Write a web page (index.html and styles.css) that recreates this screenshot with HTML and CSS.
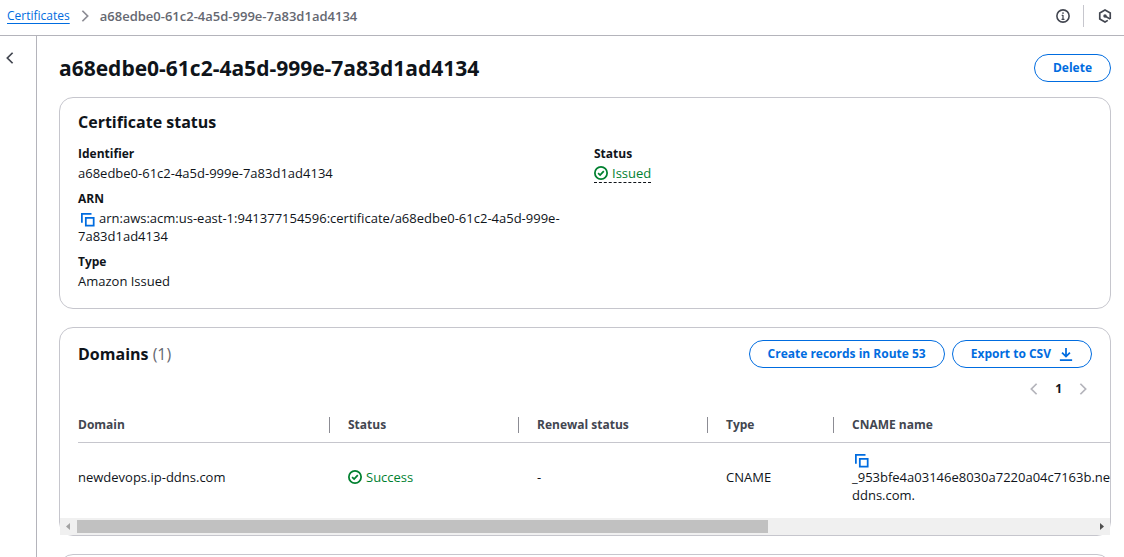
FILE: index.html
```html
<!DOCTYPE html>
<html lang="en">
<head>
<meta charset="utf-8">
<title>Certificate details</title>
<link rel="stylesheet" href="styles.css">
</head>
<body>
<svg class="defs" aria-hidden="true">
  <symbol id="copy" viewBox="0 0 16 16"><path d="M1 11V1h11M5.500 5.500h9v9h-9z" fill="none" stroke="currentColor" stroke-width="2"/></symbol>
  <symbol id="ok" viewBox="0 0 16 16"><g fill="none" stroke="currentColor" stroke-width="2"><circle cx="8" cy="8" r="7"/><path d="M4.700 8.200 7 10.400l4.200-4.600"/></g></symbol>
  <symbol id="left" viewBox="0 0 16 16"><path d="M11 2 5 8l6 6" fill="none" stroke="currentColor" stroke-width="2"/></symbol>
  <symbol id="right" viewBox="0 0 16 16"><path d="m5 2 6 6-6 6" fill="none" stroke="currentColor" stroke-width="2"/></symbol>
</svg>
<div class="app">
  <header class="topbar">
    <nav class="crumbs" aria-label="Breadcrumbs">
      <a href="#">Certificates</a>
      <svg class="icon crumb-sep"><use href="#right"/></svg>
      <span class="crumb-current">a68edbe0-61c2-4a5d-999e-7a83d1ad4134</span>
    </nav>
    <div class="tools">
      <button class="icon-btn info" aria-label="Info"><svg class="icon" viewBox="0 0 16 16" fill="none" stroke="currentColor"><circle cx="8" cy="8" r="7" stroke-width="1.800"/><path d="M8 3.800v1.800M8 6.800v5M6.500 7.200H8M6.300 11.800h3.400" stroke-width="1.400"/></svg></button>
      <button class="icon-btn" aria-label="Assistant"><svg class="icon" viewBox="0 0 16 16" fill="none" stroke="currentColor" stroke-width="1.900"><path d="M14 11.500v-7L8 1.200 2 4.500v7L8 14.800l3.200-1.800"/><circle cx="8" cy="8" r="2" fill="currentColor" stroke="none"/><path d="m8 8 6 3.600"/></svg></button>
    </div>
  </header>
  <div class="body">
    <aside class="rail"><button class="icon-btn" aria-label="Open navigation"><svg class="icon"><use href="#left"/></svg></button></aside>
    <main class="main">
      <div class="title-row">
        <h1>a68edbe0-61c2-4a5d-999e-7a83d1ad4134</h1>
        <button class="btn">Delete</button>
      </div>
      <section class="card status-card">
        <h2>Certificate status</h2>
        <div class="columns">
          <dl>
            <dt>Identifier</dt><dd>a68edbe0-61c2-4a5d-999e-7a83d1ad4134</dd>
            <dt>ARN</dt><dd><button class="copy" aria-label="Copy ARN"><svg class="icon"><use href="#copy"/></svg></button>arn:aws:acm:us-east-1:941377154596:certificate/a68edbe0-61c2-4a5d-999e-7a83d1ad4134</dd>
            <dt>Type</dt><dd>Amazon Issued</dd>
          </dl>
          <dl>
            <dt>Status</dt><dd><button class="state popover"><svg class="icon"><use href="#ok"/></svg>Issued</button></dd>
          </dl>
        </div>
      </section>
      <section class="card domains">
        <div class="card-head">
          <h2>Domains <span class="count">(1)</span></h2>
          <div class="actions">
            <button class="btn">Create records in Route 53</button>
            <button class="btn">Export to CSV <svg class="icon" viewBox="0 0 16 16" fill="none" stroke="currentColor" stroke-width="2"><path d="M8 1v9.500M3.500 6.500 8 11l4.500-4.500M1 15h14"/></svg></button>
          </div>
        </div>
        <nav class="pages" aria-label="Pagination">
          <button class="icon-btn" aria-label="Previous page"><svg class="icon"><use href="#left"/></svg></button>
          <button class="page">1</button>
          <button class="icon-btn" aria-label="Next page"><svg class="icon"><use href="#right"/></svg></button>
        </nav>
        <div class="table-wrap">
          <table>
            <colgroup><col class="c-domain"><col class="c-mid"><col class="c-mid"><col class="c-type"><col class="c-name"></colgroup>
            <thead><tr><th>Domain</th><th>Status</th><th>Renewal status</th><th>Type</th><th>CNAME name</th></tr></thead>
            <tbody><tr>
              <td>newdevops.ip-ddns.com</td>
              <td><span class="state"><svg class="icon"><use href="#ok"/></svg>Success</span></td>
              <td>-</td>
              <td>CNAME</td>
              <td><button class="copy" aria-label="Copy CNAME name"><svg class="icon"><use href="#copy"/></svg></button><br>_953bfe4a03146e8030a7220a04c7163b.newdevops.ip-<br>ddns.com.</td>
            </tr></tbody>
          </table>
        </div>
        <div class="scrollbar" aria-hidden="true">
          <svg viewBox="0 0 17 17" fill="#a3a3a3"><path d="M10 5v7L6 8.500z"/></svg>
          <div class="track"><div class="thumb"></div></div>
          <svg viewBox="0 0 17 17" fill="#505050"><path d="M7 5v7l4-3.500z"/></svg>
        </div>
      </section>
      <section class="card next"></section>
    </main>
  </div>
</div>
</body>
</html>
```

FILE: styles.css
```css
* { box-sizing: border-box; }
body {
  margin: 0;
  font: 13px/18px "Open Sans", "Noto Sans", sans-serif;
  color: #0f141a;
  background: #fff;
}
h1, h2, dl, dd { margin: 0; }
button { font: inherit; color: inherit; background: none; border: 0; padding: 0; cursor: pointer; }
.defs { position: absolute; width: 0; height: 0; }
.icon { width: 14px; height: 14px; flex: none; display: block; }

.app { height: 100vh; display: flex; flex-direction: column; overflow: hidden; }
.topbar {
  flex: none;
  height: 36px;
  display: flex;
  justify-content: space-between;
  align-items: center;
  padding: 0 12px 4px 7px;
  border-bottom: 1px solid #b4b4bb;
}
.crumbs { display: flex; align-items: center; gap: 8px; }
.crumbs a { color: #006ce0; font-size: 12px; text-decoration: underline; text-underline-offset: 3px; }
.crumb-sep { color: #8c8c94; }
.crumb-current { color: #656871; font-weight: 600; }
.tools { display: flex; align-items: center; color: #424650; }
.info { padding: 4px 13px 4px 0; margin-right: 14px; border-right: 1px solid #c6c6cd; }

.body { flex: 1; min-height: 0; display: flex; }
.rail { flex: none; width: 37px; padding: 15px 3px; border-right: 1px solid #b4b4bb; color: #424650; }
.main { flex: 1; min-width: 0; padding: 18px 13px 0 22px; overflow: hidden; }

.title-row { display: flex; justify-content: space-between; align-items: center; margin-bottom: 15px; }
h1 { font-size: 21px; line-height: 28px; }
h2 { font-size: 16px; line-height: 20px; }
.btn {
  display: flex;
  align-items: center;
  gap: 8px;
  padding: 4px 18px;
  border: 1px solid #006ce0;
  border-radius: 14px;
  color: #006ce0;
  font-size: 12px;
  font-weight: 700;
}

.card { border: 1px solid #c6c6cd; border-radius: 14px; margin-bottom: 18px; }
.status-card { padding: 14px 18px 18px; }
.columns { display: grid; grid-template-columns: 1fr 1fr; gap: 18px; margin-top: 13px; }
dt { font-weight: 700; font-size: 12px; margin-bottom: 1px; }
dd { margin-bottom: 8px; }
dd:last-child { margin-bottom: 0; }
.copy { color: #006ce0; padding: 0 4px 0 3px; vertical-align: middle; }
.state { display: inline-flex; align-items: center; gap: 4px; color: #00802f; vertical-align: top; }
.popover { border-bottom: 1px dashed #0f141a; }

.card-head { display: flex; justify-content: space-between; align-items: center; padding: 12px 18px 0; }
.count { color: #656871; font-weight: 400; }
.actions { display: flex; gap: 7px; }
.pages { display: flex; justify-content: flex-end; align-items: center; gap: 14px; padding: 12px 20px 18px; color: #b4b4bb; }
.page { color: #0f141a; font-weight: 700; font-size: 12px; }
.table-wrap { overflow: hidden; padding-left: 18px; }
table { table-layout: fixed; width: 1134px; border-collapse: separate; border-spacing: 0; }
.c-domain { width: 252px; }
.c-mid { width: 189px; }
.c-type { width: 126px; }
.c-name { width: 378px; }
th { text-align: left; color: #424650; font-size: 12px; padding: 0 0 8px; border-bottom: 1px solid #c6c6cd; }
th::after { content: ""; float: right; height: 16px; border-right: 1px solid #8c8c94; margin-top: 1px; }
th:last-child::after { content: none; }
td { padding: 7px 0 14px; }
th:not(:first-child), td:not(:first-child) { padding-left: 18px; }
.scrollbar { display: flex; height: 17px; background: #f0f0f0; }
.scrollbar svg { width: 17px; height: 17px; flex: none; }
.track { flex: 1; padding: 2px 0; }
.thumb { width: 68%; height: 13px; background: #c1c1c1; }
.next { height: 100px; margin-bottom: 0; }
```
